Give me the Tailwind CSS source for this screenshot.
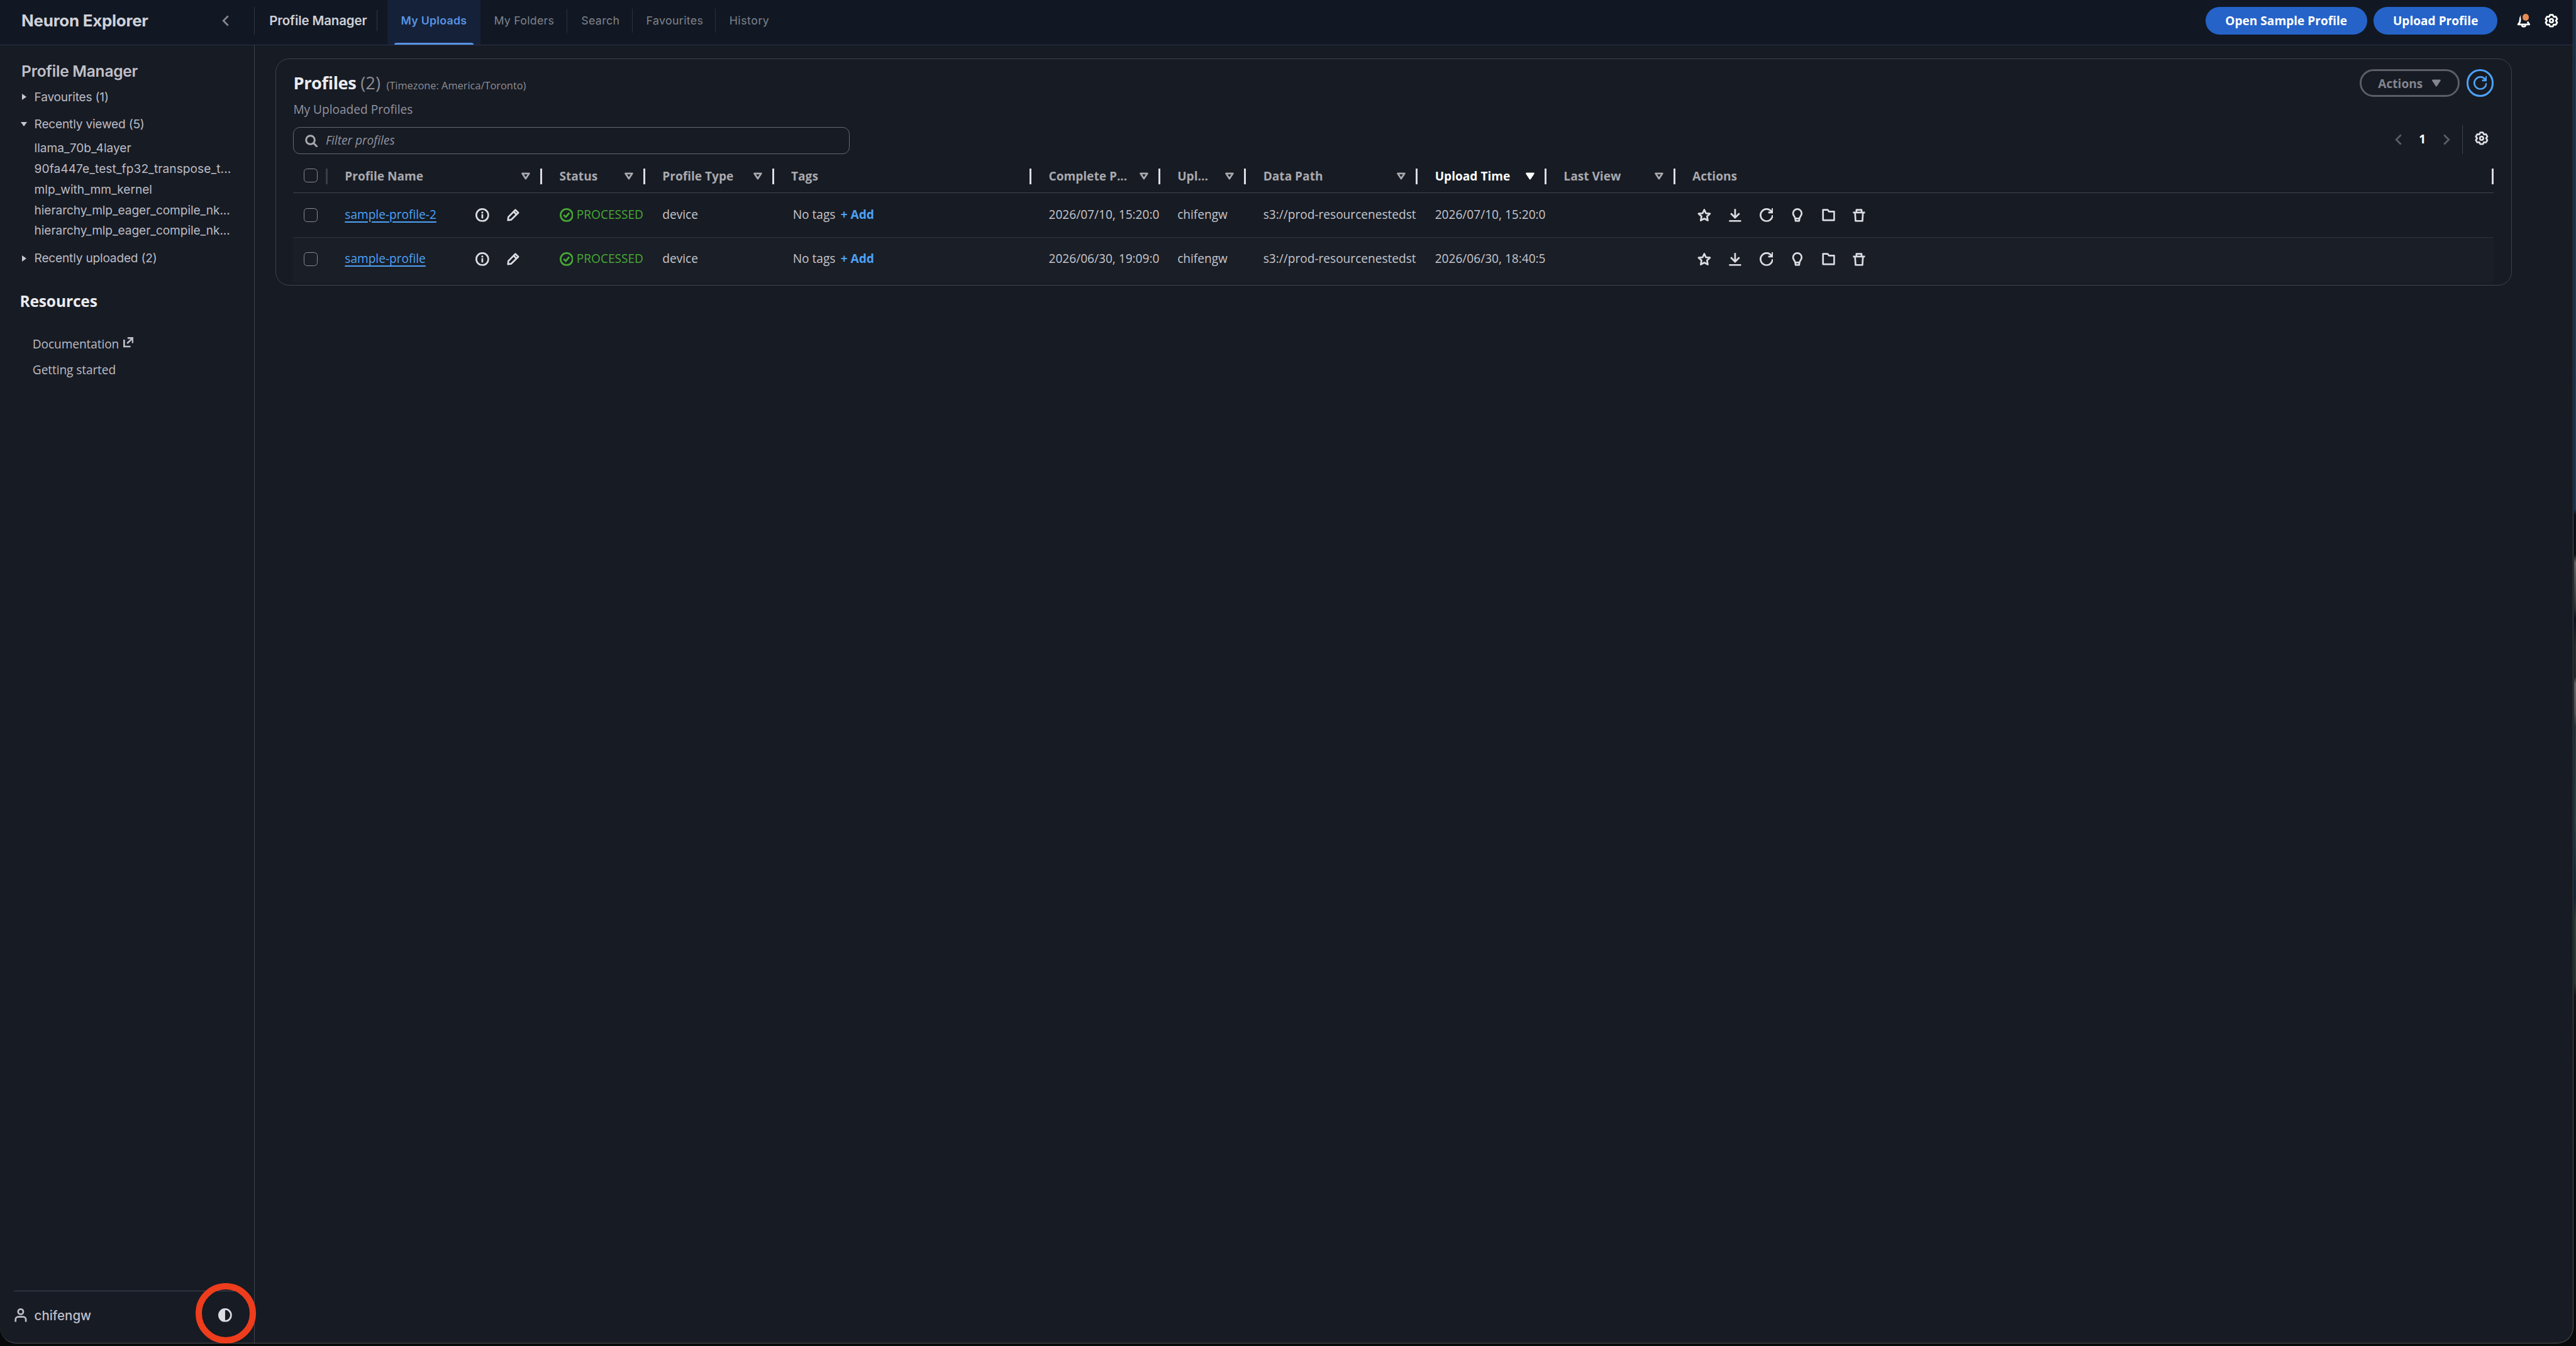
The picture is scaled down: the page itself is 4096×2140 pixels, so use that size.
<!DOCTYPE html>
<html lang="en" class="text-[21.838px]">
<head>
    <meta charset="UTF-8">
    <meta name="viewport" content="width=device-width, initial-scale=1.0">
    <script src="https://cdn.jsdelivr.net/npm/@tailwindcss/browser@4"></script>
    <title>Neuron Explorer</title>
</head>
<body class="w-[4096px] h-[2140px] overflow-hidden bg-[#07090a] font-['Open_Sans',sans-serif] text-sm text-[#c6c6cd] whitespace-nowrap relative">

    <!-- icon set, 16x16 grid -->
    <svg class="hidden">
        <defs>
            <symbol id="chev-left" viewBox="0 0 16 16"><path d="M11.5 2.5 6 8l5.5 5.5" fill="none" stroke="currentColor" stroke-width="2"/></symbol>
            <symbol id="chev-right" viewBox="0 0 16 16"><path d="M4.5 2.5 10 8l-5.5 5.5" fill="none" stroke="currentColor" stroke-width="2"/></symbol>
            <symbol id="caret" viewBox="0 0 16 16"><path d="M4 5h8l-4 6-4-6Z" fill="none" stroke="currentColor" stroke-width="2" stroke-linejoin="round"/></symbol>
            <symbol id="caret-filled" viewBox="0 0 16 16"><path d="M4 5h8l-4 6-4-6Z" fill="currentColor" stroke="currentColor" stroke-width="2" stroke-linejoin="round"/></symbol>
            <symbol id="refresh" viewBox="0 0 16 16"><path d="M10 5h5V0M15 8a7 7 0 1 1-.9-3.4" fill="none" stroke="currentColor" stroke-width="2"/></symbol>
            <symbol id="star" viewBox="0 0 16 16"><path d="m8 1.8 1.9 4.1 4.7.5-3.4 3.2.9 4.7L8 12.1l-4.1 2.2.9-4.7L1.4 6.4l4.7-.5L8 1.8Z" fill="none" stroke="currentColor" stroke-width="2" stroke-linejoin="round"/></symbol>
            <symbol id="download" viewBox="0 0 16 16"><path d="M1 15h14M8 1v10M3 6l5 5 5-5" fill="none" stroke="currentColor" stroke-width="2"/></symbol>
            <symbol id="bulb" viewBox="0 0 16 16"><path d="M6 15h4l.6-3.5C10.9 9.9 13 8.8 13 6A5 5 0 0 0 3 6c0 2.8 2.1 3.9 2.4 5.5L6 15ZM5.5 12h5" fill="none" stroke="currentColor" stroke-width="2" stroke-linejoin="round"/></symbol>
            <symbol id="folder" viewBox="0 0 16 16"><path d="M2 2h5.5L9 4h6v10H2V2Z" fill="none" stroke="currentColor" stroke-width="2" stroke-linejoin="round"/></symbol>
            <symbol id="trash" viewBox="0 0 16 16"><path d="M1 5h14M5 5V2h6v3M3.4 5 4 15h8l.6-10" fill="none" stroke="currentColor" stroke-width="2" stroke-linejoin="round"/></symbol>
            <symbol id="info" viewBox="0 0 16 16"><circle cx="8" cy="8" r="7" fill="none" stroke="currentColor" stroke-width="2"/><path d="M8 4v2M8 7v5" stroke="currentColor" stroke-width="2"/></symbol>
            <symbol id="edit" viewBox="0 0 16 16"><path d="M10.6 2 14 5.3 5.6 13.5 2 14l.5-3.8L10.6 2ZM8.6 4l3.3 3.3" fill="none" stroke="currentColor" stroke-width="2" stroke-linejoin="round"/></symbol>
            <symbol id="check" viewBox="0 0 16 16"><circle cx="8" cy="8" r="7" fill="none" stroke="currentColor" stroke-width="2"/><path d="m4.5 7.8 2.6 2.4 4-4.7" fill="none" stroke="currentColor" stroke-width="2"/></symbol>
            <symbol id="gear" viewBox="0 0 16 16"><path d="M6.43 1.18h3.14L10.6 3.5l2.52-.27 1.57 2.72L13.2 8l1.49 2.05-1.57 2.72-2.52-.27-1.03 2.32H6.43L5.4 12.5l-2.52.27-1.57-2.72L2.8 8 1.31 5.95l1.57-2.72 2.52.27Z" fill="none" stroke="currentColor" stroke-width="2" stroke-linejoin="round"/><circle cx="8" cy="8" r="2" fill="none" stroke="currentColor" stroke-width="2"/></symbol>
            <symbol id="search" viewBox="0 0 16 16"><path d="m11 11 4 4" stroke="currentColor" stroke-width="2.2"/><circle cx="7" cy="7" r="5" fill="none" stroke="currentColor" stroke-width="2.2"/></symbol>
            <symbol id="user" viewBox="0 0 16 16"><path d="M2 16v-3a3 3 0 0 1 3-3h6a3 3 0 0 1 3 3v3" fill="none" stroke="currentColor" stroke-width="2"/><circle cx="8" cy="4" r="3" fill="none" stroke="currentColor" stroke-width="2"/></symbol>
            <symbol id="contrast" viewBox="0 0 16 16"><circle cx="8" cy="8" r="7" fill="none" stroke="currentColor" stroke-width="2"/><path d="M8 1a7 7 0 0 0 0 14Z" fill="currentColor"/></symbol>
            <symbol id="external" viewBox="0 0 12 12"><path d="M1 3v8h7.5M5 1h6v6M11 1 4.5 7.3" fill="none" stroke="currentColor" stroke-width="2"/></symbol>
            <symbol id="bell" viewBox="0 0 16 16"><path d="M1.5 12.3h13c-2-1.8-2.3-3.3-2.3-5.6C12.2 3.6 10.5 1 8 1S3.8 3.6 3.8 6.7c0 2.3-.3 3.8-2.3 5.6Z" fill="none" stroke="currentColor" stroke-width="2" stroke-linejoin="round"/><path d="M6 13a2 2 0 0 0 4 0" fill="none" stroke="currentColor" stroke-width="2"/></symbol>
        </defs>
    </svg>

    <!-- desktop behind the window -->
    <div class="absolute top-0 right-0 w-[3px] h-full bg-[linear-gradient(to_bottom,#1a3652_0%,#1f3a5c_37.8%,#0a0f1a_38.3%,#0d1116_41.2%,#666_41.8%,#333a3a_45%,#0c1420_46%,#2a2e2e_48%,#262a2a_50.3%,#666_50.8%,#555_53%,#22363a_54%,#2a4048_61%,#14263c_66.6%,#2f4238_68.5%,#2c3a32_73%,#151515_74%,#0a0b0c_80%,#070808_100%)]"></div>

    <div class="w-[4092px] h-[2136px] flex flex-col bg-[#171b23] border-r border-b border-[#4f5054] rounded-b-[26px] overflow-hidden relative">

        <header class="h-13.25 shrink-0 flex bg-[#111823] border-b border-[#2a3348]">
            <div class="h-12 w-74 flex items-center justify-between pl-6.25 pr-6.5 font-['Inter',sans-serif]">
                <h1 class="text-[1.1875rem] font-bold tracking-[-0.01em] text-[#d0d1d8]">Neuron Explorer</h1>
                <svg class="size-4 text-[#85868f]"><use href="#chev-left"/></svg>
            </div>
            <div class="h-8 w-px mt-2 bg-[#2f3747]"></div>
            <div class="h-12 w-35.5 pl-4.25 flex items-center font-['Inter',sans-serif]">
                <span class="text-[0.9375rem] font-semibold tracking-[-0.007em] text-[#d0d1d8]">Profile Manager</span>
            </div>
            <div class="h-6 w-px mt-3 bg-[#2f3747]"></div>
            <nav class="flex ml-3 font-['Inter',sans-serif] text-[0.8125rem] tracking-[0.02em] text-[#7f828b]">
                <a class="w-27 h-13 pb-1 flex items-center justify-center bg-[#152138] text-[#5793e3] font-semibold tracking-[0.015em] relative">My Uploads<span class="absolute left-2 right-2 bottom-0 h-0.5 bg-[#5793e3] rounded-t-sm"></span></a>
                <a class="w-25.25 h-12 flex items-center pl-4 tracking-[0.015em]">My Folders</a>
                <span class="h-7 w-px mt-2.5 bg-[#2a303c]"></span>
                <a class="w-18.75 h-12 flex items-center pl-4">Search</a>
                <span class="h-7 w-px mt-2.5 bg-[#2a303c]"></span>
                <a class="w-24 h-12 flex items-center pl-4">Favourites</a>
                <span class="h-7 w-px mt-2.5 bg-[#2a303c]"></span>
                <a class="h-12 flex items-center px-4 tracking-[0.03em]">History</a>
            </nav>
            <div class="h-12 ml-auto mr-4.25 flex items-center text-white">
                <button class="h-8 w-47 pt-0.25 rounded-full bg-[#2563c9] font-bold">Open Sample Profile</button>
                <button class="h-8 w-36 pt-0.25 ml-2 rounded-full bg-[#2563c9] font-bold">Upload Profile</button>
                <span class="relative size-4 ml-5.75">
                    <svg class="size-4"><use href="#bell"/></svg>
                    <i class="absolute -top-0.5 left-1 size-3 rounded-full bg-[#111823] p-0.5"><i class="block size-2 rounded-full bg-[#e88b52]"></i></i>
                </span>
                <svg class="size-4 ml-4"><use href="#gear"/></svg>
            </div>
        </header>

        <div class="flex flex-1 min-h-0">
            <aside class="w-74.25 shrink-0 border-r border-[#40434c] flex flex-col pt-3.5 font-['Inter',sans-serif]">
                <h2 class="h-8 pl-6.25 flex items-center text-lg font-semibold tracking-[-0.01em] text-[#c0c0c9]">Profile Manager</h2>
                <div class="h-7 pl-6 flex items-center tracking-[-0.01em] text-[#bcbcc6]"><span class="w-4 text-[0]"><i class="block ml-0.5 size-0 border-y-[5px] border-l-[7px] border-y-transparent border-l-[#c6c6cd]"></i></span><span>Favourites (1)</span></div>
                <div class="h-8 mt-0.5 pl-6 flex items-center tracking-[-0.01em] text-[#bcbcc6]"><span class="w-4 text-[0]"><i class="block size-0 border-x-[5.5px] border-t-[7px] border-x-transparent border-t-[#c6c6cd]"></i></span><span>Recently viewed (5)</span></div>
                <ul class="pl-10 text-[#bcbcc6]">
                    <li class="h-6 flex items-center">llama_70b_4layer</li>
                    <li class="h-6 flex items-center tracking-[0.004em]">90fa447e_test_fp32_transpose_t...</li>
                    <li class="h-6 flex items-center">mlp_with_mm_kernel</li>
                    <li class="h-6 flex items-center tracking-[-0.004em]">hierarchy_mlp_eager_compile_nk...</li>
                    <li class="h-6 flex items-center tracking-[-0.004em]">hierarchy_mlp_eager_compile_nk...</li>
                </ul>
                <div class="h-8 mt-1 pl-6 flex items-center tracking-[-0.01em] text-[#bcbcc6]"><span class="w-4 text-[0]"><i class="block ml-0.5 size-0 border-y-[5px] border-l-[7px] border-y-transparent border-l-[#c6c6cd]"></i></span><span>Recently uploaded (2)</span></div>
                <div class="font-['Open_Sans',sans-serif] text-[#bcbcc6]">
                    <h2 class="h-8 mt-4.5 pl-5.75 flex items-center text-lg font-bold tracking-[-0.006em] text-[#ebebf0]">Resources</h2>
                    <a class="h-7.5 mt-4.75 pl-9.5 flex items-center tracking-[-0.005em]">Documentation<svg class="size-3 ml-1.25 -mt-1"><use href="#external"/></svg></a>
                    <a class="h-7.5 pl-9.5 flex items-center pt-0.25 tracking-[-0.005em]">Getting started</a>
                </div>
                <div class="mt-auto mx-4 mb-1 h-14.25 border-t border-[#40475a] flex items-center justify-between pr-2.5">
                    <span class="flex items-center text-[0.9375rem] font-medium text-[#bfbfc9]"><svg class="size-4 mr-2"><use href="#user"/></svg><span>chifengw</span></span>
                    <svg class="size-4 text-[#dcdce3]"><use href="#contrast"/></svg>
                </div>
            </aside>

            <main class="pt-3.75 pl-6">
                <section class="w-651.25 h-66.25 border border-[#3f424a] rounded-2xl pt-3 px-5">
                    <div class="h-8 flex items-center">
                        <div class="flex items-baseline text-[#8c8d96]">
                            <h2 class="text-xl font-bold tracking-[-0.015em] text-[#ebebf0] leading-none">Profiles</h2>
                            <span class="text-xl leading-none ml-1.25">(2)</span>
                            <span class="text-xs leading-none ml-1.75">(Timezone: America/Toronto)</span>
                        </div>
                        <button class="ml-auto h-8 w-29 rounded-full border-3 border-[#5b5e67] text-[#84858f] font-bold flex items-center pl-4.75 pt-0.5"><span>Actions</span><svg class="size-4 ml-2 -mt-0.5"><use href="#caret-filled"/></svg></button>
                        <button class="ml-2 size-8 rounded-full border-3 border-[#4da2f8] text-[#4da2f8] flex items-center justify-center"><svg class="size-4"><use href="#refresh"/></svg></button>
                    </div>
                    <p class="h-5 mt-1.25 flex items-center text-[#9293a0]">My Uploaded Profiles</p>
                    <div class="flex items-center mt-2.5">
                        <div class="w-162 h-8 border border-[#666871] rounded-lg flex items-center pl-3"><svg class="size-4 mr-2.25 text-[#a9a9ae]"><use href="#search"/></svg><span class="italic text-[#9293a0]">Filter profiles</span></div>
                        <div class="ml-auto mr-1.5 -mt-0.5 flex items-center text-[#5b5e67]">
                            <svg class="size-4"><use href="#chev-left"/></svg>
                            <span class="w-10.25 text-center font-bold text-white">1</span>
                            <svg class="size-4"><use href="#chev-right"/></svg>
                            <span class="w-px h-8.5 ml-2.5 mr-3.5 bg-[#40434c]"></span>
                            <svg class="size-4 text-[#dcdce3] -mt-0.75"><use href="#gear"/></svg>
                        </div>
                    </div>

                    <!-- profiles table -->
                    <div class="mt-1.75 h-9.5 flex items-center border-b border-[#42454d] font-bold text-[#a9a9ae]">
                        <div class="w-10 h-4.5 pl-3 flex items-center border-r-[3px] border-[#3a3d45]"><i class="size-4 border border-[#8a8b95] rounded-sm -mt-0.5"></i></div>
                        <div class="w-62.5 h-4.5 pl-5 pr-2.25 flex items-center justify-between border-r-[3px] border-[#dcdce3]"><span>Profile Name</span><svg class="size-4"><use href="#caret"/></svg></div>
                        <div class="w-30 h-4.5 pl-5 pr-2.25 flex items-center justify-between border-r-[3px] border-[#dcdce3]"><span>Status</span><svg class="size-4"><use href="#caret"/></svg></div>
                        <div class="w-37.5 h-4.5 pl-5 pr-2.25 flex items-center justify-between border-r-[3px] border-[#dcdce3]"><span>Profile Type</span><svg class="size-4"><use href="#caret"/></svg></div>
                        <div class="w-75 h-4.5 pl-5 flex items-center border-r-[3px] border-[#dcdce3]"><span>Tags</span></div>
                        <div class="w-37.5 h-4.5 pl-5 pr-2.25 flex items-center justify-between border-r-[3px] border-[#dcdce3]"><span>Complete P...</span><svg class="size-4"><use href="#caret"/></svg></div>
                        <div class="w-25 h-4.5 pl-5 pr-2.25 flex items-center justify-between border-r-[3px] border-[#dcdce3]"><span>Upl...</span><svg class="size-4"><use href="#caret"/></svg></div>
                        <div class="w-50 h-4.5 pl-5 pr-2.25 flex items-center justify-between border-r-[3px] border-[#dcdce3]"><span>Data Path</span><svg class="size-4"><use href="#caret"/></svg></div>
                        <div class="w-37.5 h-4.5 pl-5 pr-2.25 flex items-center justify-between border-r-[3px] border-[#dcdce3] text-white"><span>Upload Time</span><svg class="size-4"><use href="#caret-filled"/></svg></div>
                        <div class="w-37.5 h-4.5 pl-5 pr-2.25 flex items-center justify-between border-r-[3px] border-[#dcdce3]"><span>Last View</span><svg class="size-4"><use href="#caret"/></svg></div>
                        <div class="flex-1 h-4.5 pl-5 flex items-center border-r-[3px] border-[#dcdce3]"><span>Actions</span></div>
                    </div>

                    <div class="h-13 flex items-center border-b border-[#2f333c]">
                        <div class="w-10 pl-3"><i class="block size-4 border border-[#8a8b95] rounded-sm"></i></div>
                        <div class="w-62.5 pl-5 pr-5 flex items-center justify-between"><a class="text-[#4da2f8] underline decoration-[1.5px] underline-offset-[4px]">sample-profile-2</a><span class="flex gap-5 text-[#dcdce3] mr-1.5"><svg class="size-4"><use href="#info"/></svg><svg class="size-4"><use href="#edit"/></svg></span></div>
                        <div class="w-30 pl-5 flex items-center text-[#46a835]"><svg class="size-4 mr-1"><use href="#check"/></svg><span>PROCESSED</span></div>
                        <div class="w-37.5 pl-5"><span>device</span></div>
                        <div class="w-75 pl-5.5"><span>No tags</span><b class="ml-1.5 text-[#4da2f8]">+ Add</b></div>
                        <div class="w-37.5 pl-5"><span>2026/07/10, 15:20:0</span></div>
                        <div class="w-25 pl-5"><span>chifengw</span></div>
                        <div class="w-50 pl-5"><span>s3://prod-resourcenestedst</span></div>
                        <div class="w-37.5 pl-5"><span>2026/07/10, 15:20:0</span></div>
                        <div class="w-37.5"></div>
                        <div class="pl-6.5 flex gap-5 text-[#dcdce3]">
                            <svg class="size-4"><use href="#star"/></svg>
                            <svg class="size-4"><use href="#download"/></svg>
                            <svg class="size-4"><use href="#refresh"/></svg>
                            <svg class="size-4"><use href="#bulb"/></svg>
                            <svg class="size-4"><use href="#folder"/></svg>
                            <svg class="size-4"><use href="#trash"/></svg>
                        </div>
                    </div>

                    <div class="h-13 pb-0.5 flex items-center bg-[#1a1e26]">
                        <div class="w-10 pl-3"><i class="block size-4 border border-[#8a8b95] rounded-sm"></i></div>
                        <div class="w-62.5 pl-5 pr-5 flex items-center justify-between"><a class="text-[#4da2f8] underline decoration-[1.5px] underline-offset-[4px]">sample-profile</a><span class="flex gap-5 text-[#dcdce3] mr-1.5"><svg class="size-4"><use href="#info"/></svg><svg class="size-4"><use href="#edit"/></svg></span></div>
                        <div class="w-30 pl-5 flex items-center text-[#46a835]"><svg class="size-4 mr-1"><use href="#check"/></svg><span>PROCESSED</span></div>
                        <div class="w-37.5 pl-5"><span>device</span></div>
                        <div class="w-75 pl-5.5"><span>No tags</span><b class="ml-1.5 text-[#4da2f8]">+ Add</b></div>
                        <div class="w-37.5 pl-5"><span>2026/06/30, 19:09:0</span></div>
                        <div class="w-25 pl-5"><span>chifengw</span></div>
                        <div class="w-50 pl-5"><span>s3://prod-resourcenestedst</span></div>
                        <div class="w-37.5 pl-5"><span>2026/06/30, 18:40:5</span></div>
                        <div class="w-37.5"></div>
                        <div class="pl-6.5 flex gap-5 text-[#dcdce3]">
                            <svg class="size-4"><use href="#star"/></svg>
                            <svg class="size-4"><use href="#download"/></svg>
                            <svg class="size-4"><use href="#refresh"/></svg>
                            <svg class="size-4"><use href="#bulb"/></svg>
                            <svg class="size-4"><use href="#folder"/></svg>
                            <svg class="size-4"><use href="#trash"/></svg>
                        </div>
                    </div>
                </section>
            </main>
        </div>
    </div>

    <!-- highlight ring around the theme toggle -->
    <div class="absolute left-[311px] top-[2040px] size-[96px] rounded-full border-[10px] border-[#ee3d1c]"></div>
</body>
</html>
